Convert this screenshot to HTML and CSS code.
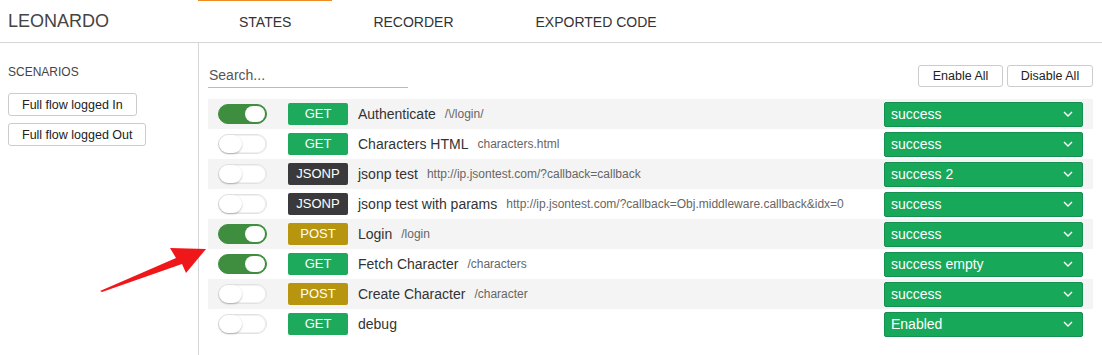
FILE: index.html
```html
<!DOCTYPE html>
<html>
<head>
<meta charset="utf-8">
<link rel="stylesheet" href="styles.css">
</head>
<body>
<header class="topbar">
  <div class="brand">LEONARDO</div>
  <nav class="tabs">
    <div class="tab active">STATES</div>
    <div class="tab">RECORDER</div>
    <div class="tab">EXPORTED CODE</div>
  </nav>
</header>
<div class="layout">
  <aside class="sidebar">
    <div class="side-title">SCENARIOS</div>
    <button class="scenario">Full flow logged In</button>
    <button class="scenario">Full flow logged Out</button>
  </aside>
  <main class="main">
    <div class="toolbar">
      <div class="search">Search...</div>
      <div class="actions">
        <button class="btn">Enable All</button>
        <button class="btn">Disable All</button>
      </div>
    </div>
    <div class="rows">
      <div class="row alt">
        <span class="toggle on"><span class="knob"></span></span>
        <span class="badge get">GET</span>
        <span class="name">Authenticate</span><span class="path">/\/login/</span>
        <div class="select">success<svg class="chev" viewBox="0 0 10 6"><path d="M1 1l4 4 4-4" /></svg></div>
      </div>
      <div class="row">
        <span class="toggle"><span class="knob"></span></span>
        <span class="badge get">GET</span>
        <span class="name">Characters HTML</span><span class="path">characters.html</span>
        <div class="select">success<svg class="chev" viewBox="0 0 10 6"><path d="M1 1l4 4 4-4" /></svg></div>
      </div>
      <div class="row alt">
        <span class="toggle"><span class="knob"></span></span>
        <span class="badge jsonp">JSONP</span>
        <span class="name">jsonp test</span><span class="path">http://ip.jsontest.com/?callback=callback</span>
        <div class="select">success 2<svg class="chev" viewBox="0 0 10 6"><path d="M1 1l4 4 4-4" /></svg></div>
      </div>
      <div class="row">
        <span class="toggle"><span class="knob"></span></span>
        <span class="badge jsonp">JSONP</span>
        <span class="name">jsonp test with params</span><span class="path">http://ip.jsontest.com/?callback=Obj.middleware.callback&amp;idx=0</span>
        <div class="select">success<svg class="chev" viewBox="0 0 10 6"><path d="M1 1l4 4 4-4" /></svg></div>
      </div>
      <div class="row alt">
        <span class="toggle on"><span class="knob"></span></span>
        <span class="badge post">POST</span>
        <span class="name">Login</span><span class="path">/login</span>
        <div class="select">success<svg class="chev" viewBox="0 0 10 6"><path d="M1 1l4 4 4-4" /></svg></div>
      </div>
      <div class="row">
        <span class="toggle on"><span class="knob"></span></span>
        <span class="badge get">GET</span>
        <span class="name">Fetch Character</span><span class="path">/characters</span>
        <div class="select">success empty<svg class="chev" viewBox="0 0 10 6"><path d="M1 1l4 4 4-4" /></svg></div>
      </div>
      <div class="row alt">
        <span class="toggle"><span class="knob"></span></span>
        <span class="badge post">POST</span>
        <span class="name">Create Character</span><span class="path">/character</span>
        <div class="select">success<svg class="chev" viewBox="0 0 10 6"><path d="M1 1l4 4 4-4" /></svg></div>
      </div>
      <div class="row">
        <span class="toggle"><span class="knob"></span></span>
        <span class="badge get">GET</span>
        <span class="name">debug</span><span class="path"></span>
        <div class="select">Enabled<svg class="chev" viewBox="0 0 10 6"><path d="M1 1l4 4 4-4" /></svg></div>
      </div>
    </div>
  </main>
</div>
<svg class="arrow" width="120" height="60" viewBox="0 0 120 60">
  <polygon points="2,55 78,22 72,12 108,13 88,37 84,28 4,56" fill="#f0171b"/>
</svg>
</body>
</html>
```
FILE: styles.css
```css
* { box-sizing: border-box; }
body {
  margin: 0;
  font-family: "Liberation Sans", Arial, sans-serif;
  color: #333;
  background: #fff;
  width: 1102px;
  height: 355px;
  overflow: hidden;
  position: relative;
}
.topbar {
  display: flex;
  height: 43px;
  border-bottom: 1px solid #d6d6d6;
}
.brand {
  width: 198px;
  padding-left: 8px;
  font-size: 18px;
  line-height: 42px;
  color: #444;
}
.tabs { display: flex; }
.tab {
  padding: 0 41px;
  font-size: 14px;
  line-height: 42px;
  color: #333;
  border-top: 2px solid transparent;
  margin-top: -1px;
}
.tab.active { border-top-color: #f08a24; }
.layout { display: flex; height: 312px; }
.sidebar {
  width: 199px;
  border-right: 1px solid #d6d6d6;
  padding: 22px 0 0 8px;
  display: flex;
  flex-direction: column;
  align-items: flex-start;
}
.side-title {
  font-size: 12px;
  color: #444;
  line-height: 14px;
  margin-bottom: 14px;
}
.scenario {
  font-family: inherit;
  font-size: 12.5px;
  color: #222;
  background: #fff;
  border: 1px solid #ccc;
  border-radius: 3px;
  height: 23px;
  padding: 0 13px;
  margin-bottom: 7px;
}
.main {
  flex: 1;
  padding: 20px 9px 0 9px;
}
.toolbar {
  display: flex;
  justify-content: space-between;
  align-items: flex-start;
  height: 36px;
}
.search {
  width: 200px;
  margin-top: 4px;
  font-size: 14px;
  color: #555;
  line-height: 16px;
  padding-bottom: 4px;
  border-bottom: 1px solid #bbb;
  padding-left: 1px;
}
.actions { display: flex; gap: 4px; margin-top: 2px; }
.btn {
  font-family: inherit;
  font-size: 12.5px;
  color: #222;
  background: #fff;
  border: 1px solid #ccc;
  border-radius: 3px;
  height: 22px;
  width: 86px;
  padding: 0;
}
.btn:first-child { width: 85px; }
.rows { display: flex; flex-direction: column; }
.row {
  height: 30px;
  display: flex;
  align-items: center;
  padding-left: 10px;
}
.row.alt { background: #f4f4f4; }
.toggle {
  width: 49px;
  height: 20px;
  border-radius: 10px;
  background: #fff;
  border: 1px solid #e2e2e2;
  box-shadow: inset 0 0 0 1px #f0f0f0;
  position: relative;
  margin-right: 21px;
  flex: none;
}
.toggle .knob {
  position: absolute;
  top: 0;
  left: 0;
  width: 23px;
  height: 18px;
  border-radius: 10px;
  background: #fff;
  box-shadow: 0 1px 2px rgba(0,0,0,0.25);
}
.toggle.on {
  background: #3f8e3f;
  border-color: #3f8e3f;
  box-shadow: none;
}
.toggle.on .knob { left: auto; right: 1px; top: 1px; height: 16px; width: 20px; box-shadow: none; }
.badge {
  width: 60px;
  height: 22px;
  border-radius: 2px;
  color: #fff;
  font-size: 13px;
  line-height: 22px;
  text-align: center;
  margin-right: 10px;
  flex: none;
}
.badge.get { background: #1eaa5d; }
.badge.jsonp { background: #3a3a3d; }
.badge.post { background: #b8950f; }
.name { font-size: 14px; color: #333; margin-right: 9px; }
.path { font-size: 12px; color: #666; }
.select {
  margin-left: auto;
  margin-right: 10px;
  width: 199px;
  height: 25px;
  background: #17a85a;
  border: 1px solid #149150;
  border-radius: 2px;
  color: #fff;
  font-size: 14px;
  padding-left: 6px;
  display: flex;
  align-items: center;
  justify-content: space-between;
}
.chev {
  width: 10px;
  height: 6px;
  margin-right: 9px;
  fill: none;
  stroke: #fff;
  stroke-width: 1.4;
}
.arrow {
  position: absolute;
  left: 98px;
  top: 236px;
}
```
